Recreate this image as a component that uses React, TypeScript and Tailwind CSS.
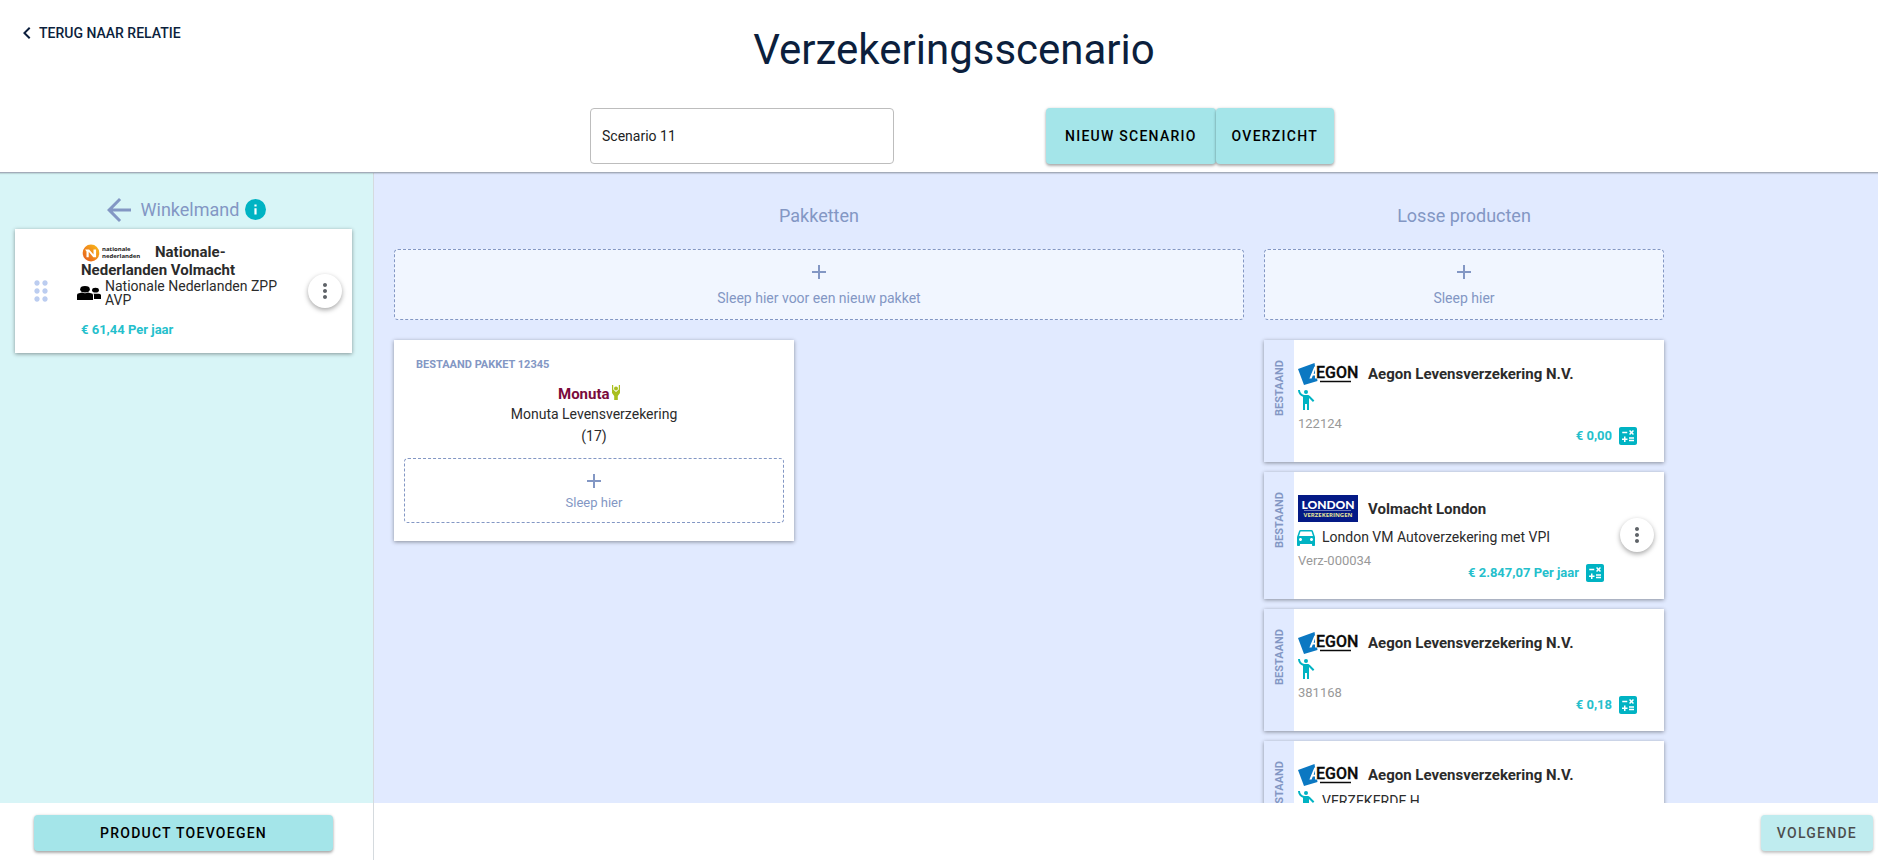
import type { ReactNode } from 'react';
import {
  MdAdd,
  MdArrowBack,
  MdCalculate,
  MdChevronLeft,
  MdDirectionsCar,
  MdDragIndicator,
  MdEmojiPeople,
  MdMoreVert,
} from 'react-icons/md';

type Product = {
  id: string;
  brand: 'aegon' | 'london';
  company: string;
  kind: 'person' | 'car';
  name?: string;
  policy: string;
  price: string;
  menu?: boolean;
};

const products: Product[] = [
  { id: 'p1', brand: 'aegon', company: 'Aegon Levensverzekering N.V.', kind: 'person', policy: '122124', price: '€ 0,00' },
  { id: 'p2', brand: 'london', company: 'Volmacht London', kind: 'car', name: 'London VM Autoverzekering met VPI', policy: 'Verz-000034', price: '€ 2.847,07 Per jaar', menu: true },
  { id: 'p3', brand: 'aegon', company: 'Aegon Levensverzekering N.V.', kind: 'person', policy: '381168', price: '€ 0,18' },
  { id: 'p4', brand: 'aegon', company: 'Aegon Levensverzekering N.V.', kind: 'person', name: 'VERZEKERDE H', policy: '', price: '' },
];

const cardShadow = 'shadow-[0_1px_4px_rgba(0,0,0,0.4)]';
const buttonBase =
  'rounded-[4px] bg-[#a4e5e9] text-[14px] font-medium uppercase tracking-[1.25px] text-black shadow-[0_2px_3px_rgba(0,0,0,0.3),0_0_3px_rgba(0,0,0,0.12)]';

function AegonLogo() {
  return (
    <svg width="60" height="22" viewBox="0 0 60 22" className="shrink-0 overflow-visible" role="img" aria-label="Aegon">
      <path d="M0 6 16.5 0 19.5 18 6 22Z" fill="#0b78c2" />
      <path d="M16.4 3.5H19.2V15.5H17V12.6H14.8L13.6 15.5H11.4Z M17 6.6 15.6 10.8H17Z" fill="#fff" fillRule="evenodd" />
      <text x="18" y="15" fontSize="16" fontWeight="500" fontFamily="Roboto, sans-serif" fill="#0a0a0a" stroke="#0a0a0a" strokeWidth="0.3">EGON</text>
      <path d="M22 18.5H53" stroke="#0a0a0a" strokeWidth="1.5" />
    </svg>
  );
}

function LondonLogo() {
  return (
    <svg width="60" height="27" viewBox="0 0 60 27" className="shrink-0" role="img" aria-label="London Verzekeringen">
      <rect width="60" height="27" fill="#041a86" />
      <text x="30" y="14" textAnchor="middle" fontSize="12" fontWeight="900" fontFamily="Lato, sans-serif" fill="#fff">LONDON</text>
      <path d="M6 15.5H53" stroke="#8d97cc" strokeWidth="0.8" />
      <text x="30" y="22" textAnchor="middle" fontSize="6" fontWeight="700" fontFamily="'Open Sans', sans-serif" fill="#e5e59a">VERZEKERINGEN</text>
    </svg>
  );
}

function MonutaLogo() {
  return (
    <svg width="72" height="18" viewBox="0 0 72 18" role="img" aria-label="Monuta">
      <text x="0" y="14" fontSize="15" fontWeight="700" fontFamily="Roboto, sans-serif" fill="#7a0a3c">Monuta</text>
      <circle cx="58" cy="3.5" r="2" fill="#a9bf1e" />
      <path d="M54 0H55.2V4.5L58 7 60.8 4.5V0H62V8L59.8 11V15H56.2V11L54 8Z" fill="#a9bf1e" />
    </svg>
  );
}

function NationaleNederlandenLogo() {
  return (
    <svg width="74" height="18" viewBox="0 1 74 18" className="-my-1 inline-block align-middle" role="img" aria-label="Nationale-Nederlanden">
      <defs>
        <linearGradient id="nn" x1="1" y1="0" x2="0" y2="1">
          <stop offset="0" stopColor="#fbbf17" />
          <stop offset="0.5" stopColor="#f08a1c" />
          <stop offset="1" stopColor="#e2571f" />
        </linearGradient>
      </defs>
      <ellipse cx="10" cy="10" rx="8.3" ry="8.5" fill="url(#nn)" />
      <path d="M4.1 6.5H8.1L12.5 11.5V6.5H15.1V14.2H12.3L7.7 8.8V14.2H5.5V8.5Z" fill="#fff" />
      <text x="21" y="8" fontSize="6" fontWeight="700" fontFamily="'Open Sans', sans-serif" fill="#222">nationale</text>
      <text x="21" y="15" fontSize="6" fontWeight="700" fontFamily="'Open Sans', sans-serif" fill="#222">nederlanden</text>
    </svg>
  );
}

function PeopleIcon() {
  return (
    <svg width="24" height="16" viewBox="0 0 24 16" className="shrink-0" aria-hidden>
      <ellipse cx="8" cy="4.2" rx="4.8" ry="3.2" />
      <ellipse cx="18.5" cy="5.2" rx="3.4" ry="2.4" />
      <path d="M0 15V10Q0 8.2 2 8.2L5 7.6Q8 9 11 7.6L14 8.2Q16 8.4 16 10V15Z" />
      <path d="M17 14V10.5Q17 9 16.4 8.7H22Q24 8.7 24 10.2V14Z" />
    </svg>
  );
}

function InfoIcon() {
  return (
    <svg width="21" height="21" viewBox="0 0 21 21" className="ml-1.5 shrink-0" role="img" aria-label="Informatie">
      <circle cx="10.5" cy="10.5" r="10.5" fill="#00b3c3" />
      <path d="M9.4 5.5H11.6V7.5H9.4ZM9.4 9.2H11.6V15.5H9.4Z" fill="#fff" />
    </svg>
  );
}

function MenuButton() {
  return (
    <button
      type="button"
      aria-label="Meer opties"
      className="flex size-[34px] shrink-0 items-center justify-center rounded-full bg-white text-[#5f6368] shadow-[0_2px_5px_rgba(0,0,0,0.35)]"
    >
      <MdMoreVert size={24} />
    </button>
  );
}

function DropZone({ children, small }: { children: ReactNode; small?: boolean }) {
  return (
    <div
      className={`flex flex-col items-center justify-center rounded-[4px] border border-dashed border-[#8397c4] text-[#8397c4] ${
        small ? 'h-[65px] text-[13px]' : 'h-[71px] bg-[#f1f6ff] pt-0.5 text-[14px]'
      }`}
    >
      <MdAdd size={24} />
      <span className={small ? 'leading-[20px]' : 'leading-[28px]'}>{children}</span>
    </div>
  );
}

function ProductCard({ product }: { product: Product }) {
  return (
    <article className={`flex bg-white ${cardShadow}`}>
      <div className="flex w-[30px] shrink-0 justify-center bg-[#e1eaff] pt-5 pl-0.5">
        <span className="rotate-180 self-start text-[11px] leading-[14px] font-bold text-[#8397c4] [writing-mode:vertical-rl]">BESTAAND</span>
      </div>
      <div className={`min-w-0 flex-1 pt-[23px] pb-[17px] pl-1 ${product.menu ? 'pr-0' : 'pr-6'}`}>
        <div className="flex items-center gap-2.5">
          {product.brand === 'aegon' ? <AegonLogo /> : <LondonLogo />}
          <h3 className="text-[15px] leading-[20px] font-bold">{product.company}</h3>
        </div>
        <div className="-ml-1 flex h-[30px] items-center gap-1">
          {product.kind === 'person' ? (
            <MdEmojiPeople size={24} className="shrink-0 text-[#00b3c3]" />
          ) : (
            <MdDirectionsCar size={24} className="shrink-0 text-[#00b3c3]" />
          )}
          <span className="text-[14px]">{product.name}</span>
        </div>
        <div className="flex h-[30px] items-start justify-between">
          <span className="text-[13px] leading-[18px] text-[#999]">{product.policy}</span>
          {product.price && (
            <span className="flex items-center gap-1 self-center pt-3 text-[13px] font-bold text-[#25bfcc]">
              {product.price}
              <MdCalculate size={24} className="text-[#00b3c3]" />
            </span>
          )}
        </div>
      </div>
      {product.menu && (
        <div className="flex w-[57px] shrink-0 items-center justify-center pb-0.5 pl-0.5">
          <MenuButton />
        </div>
      )}
    </article>
  );
}

function Header() {
  return (
    <header className="relative z-10 h-[173px] shrink-0 border-b border-[#a3abb9] bg-white shadow-[0_1px_1px_rgba(0,0,0,0.12)]">
      <div className="grid grid-cols-[1fr_auto_1fr] items-start pl-[15px]">
        <a href="#relatie" className="mt-[21px] flex items-center justify-self-start text-[14px] font-medium text-[#0c1f3d]">
          <MdChevronLeft size={24} />
          TERUG NAAR RELATIE
        </a>
        <h1 className="pt-[25px] pl-[15px] text-[42px] leading-[50px] text-[#0c1f3d]">Verzekeringsscenario</h1>
      </div>
      <form className="mt-[33px] flex h-14 justify-center gap-[152px] pl-[46px]">
        <input
          aria-label="Naam scenario"
          defaultValue="Scenario 11"
          className="w-[304px] rounded-[4px] border border-[#bdbdbd] px-[11px] text-[14px] text-[#222]"
        />
        <div className="flex">
          <button type="button" className={`px-[19px] ${buttonBase}`}>Nieuw scenario</button>
          <button type="button" className={`px-4 ${buttonBase}`}>Overzicht</button>
        </div>
      </form>
    </header>
  );
}

function Cart() {
  return (
    <aside className="flex w-[374px] shrink-0 flex-col border-r border-[#d5dade]">
      <div className="flex-1 bg-[#d8f5f7] pt-[19px] pr-[21px] pl-[15px]">
        <h2 className="flex h-[37px] items-center justify-center pb-0.5 text-[18px] text-[#8397c4]">
          <MdArrowBack size={36} className="mr-1" />
          Winkelmand
          <InfoIcon />
        </h2>
        <article className={`flex h-[124px] items-center bg-white px-2.5 ${cardShadow}`}>
          <MdDragIndicator size={32} className="shrink-0 text-[#bccdf0]" />
          <div className="ml-6 w-[204px]">
            <h3 className="w-[184px] text-[15px] leading-[18px] font-bold">
              <NationaleNederlandenLogo />
              Nationale-Nederlanden Volmacht
            </h3>
            <div className="-ml-1 flex items-center gap-1">
              <PeopleIcon />
              <span className="text-[14px] leading-[14px]">Nationale Nederlanden ZPP AVP</span>
            </div>
            <p className="mt-3.5 text-[13px] leading-[18px] font-bold text-[#25bfcc]">€ 61,44 Per jaar</p>
          </div>
          <div className="ml-auto">
            <MenuButton />
          </div>
        </article>
      </div>
      <div className="flex h-[57px] items-start bg-white pt-3 pr-10 pl-[34px]">
        <button type="button" className={`h-9 flex-1 ${buttonBase}`}>Product toevoegen</button>
      </div>
    </aside>
  );
}

function Packages() {
  return (
    <section className="w-[850px] shrink-0">
      <h2 className="pb-[21px] text-center text-[18px] leading-[24px] text-[#8397c4]">Pakketten</h2>
      <DropZone>Sleep hier voor een nieuw pakket</DropZone>
      <article className={`mt-5 w-[400px] bg-white px-2.5 pt-[17px] pb-[18px] ${cardShadow}`}>
        <h3 className="pl-3 text-[11px] leading-[16px] font-bold text-[#8397c4]">BESTAAND PAKKET 12345</h3>
        <div className="flex flex-col items-center pt-3 pb-[11px] text-[14px] leading-[22px]">
          <MonutaLogo />
          <p>Monuta Levensverzekering</p>
          <p>(17)</p>
        </div>
        <DropZone small>Sleep hier</DropZone>
      </article>
    </section>
  );
}

export default function App() {
  return (
    <div className="flex h-screen flex-col overflow-hidden bg-white font-['Roboto',sans-serif] text-[#2b2b2b]">
      <Header />
      <div className="flex min-h-0 flex-1">
        <Cart />
        <div className="flex min-w-0 flex-1 flex-col">
          <main className="flex min-h-0 flex-1 gap-5 overflow-hidden bg-[#e1eaff] pt-[31px] pl-5">
            <Packages />
            <section className="w-[400px] shrink-0">
              <h2 className="pb-[21px] text-center text-[18px] leading-[24px] text-[#8397c4]">Losse producten</h2>
              <DropZone>Sleep hier</DropZone>
              <div className="mt-5 flex flex-col gap-2.5">
                {products.map((product) => (
                  <ProductCard key={product.id} product={product} />
                ))}
              </div>
            </section>
          </main>
          <footer className="flex h-[57px] shrink-0 items-start justify-end bg-white pt-3 pr-[5px]">
            <button type="button" disabled className={`h-9 px-4 opacity-70 ${buttonBase}`}>Volgende</button>
          </footer>
        </div>
      </div>
    </div>
  );
}
